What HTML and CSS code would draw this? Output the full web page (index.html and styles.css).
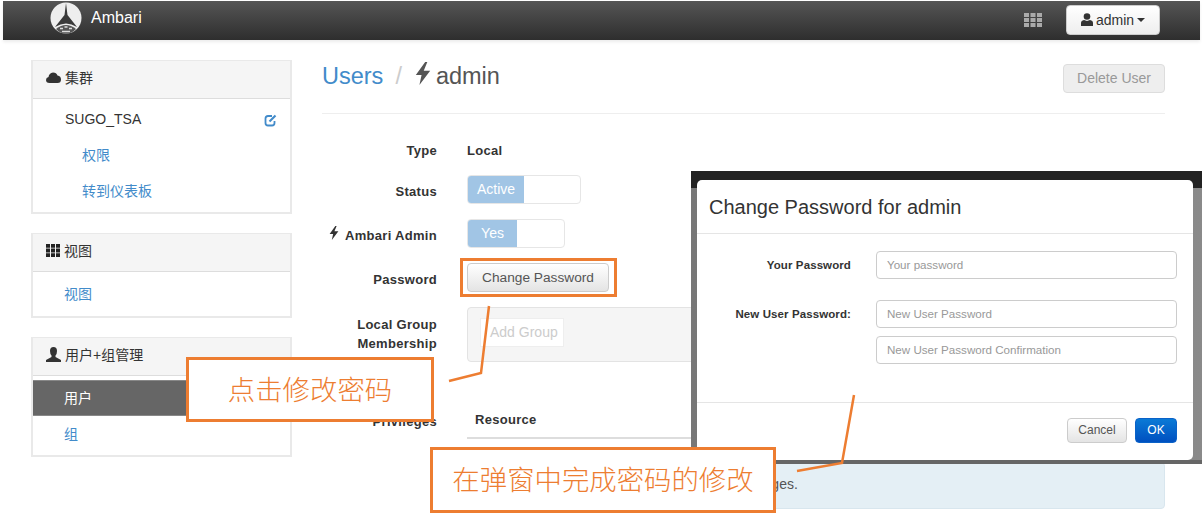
FILE: index.html
```html
<!DOCTYPE html>
<html lang="en">
<head>
    <meta charset="UTF-8">
    <title>Ambari</title>
    <link rel="stylesheet" href="styles.css">
</head>
<body>
<div id="topbar">
    <a class="brand">
        <svg class="logo" width="32" height="32" viewBox="0 0 32 32">
            <circle cx="16" cy="16" r="15.500" fill="#eee"/>
            <path d="M16 1 L17.500 13 L27 25 Q16 18 5 25 L14.500 13 Z" fill="#3a3a3a"/>
            <path d="M6 27 Q16 19 26 27 Q22 31.500 16 31.500 Q10 31.500 6 27 Z" fill="#555"/>
            <path d="M10 26.500h3M14.500 25h3M19 26.500h3M12 29.500h8" stroke="#ddd" stroke-width="1.400"/>
        </svg>
        Ambari
    </a>
    <div class="topright">
        <svg width="18" height="14" viewBox="0 0 18 14" fill="#aaa">
            <path d="M0 0h5v4H0zM6.500 0h5v4h-5zM13 0h5v4h-5zM0 5h5v4H0zM6.500 5h5v4h-5zM13 5h5v4h-5zM0 10h5v4H0zM6.500 10h5v4h-5zM13 10h5v4h-5z"/>
        </svg>
        <div class="userbtn">
            <svg width="12" height="13" viewBox="0 0 12 13" fill="#333"><circle cx="6" cy="3.500" r="3.300"/><path d="M0 13V10Q0 7.500 3 7L6 8L9 7Q12 7.500 12 10V13Z"/></svg>
            admin
            <span class="caret"></span>
        </div>
    </div>
</div>

<div id="page">
    <div id="sidebar">
        <div class="panel">
            <div class="panel-head">
                <svg width="15" height="11" viewBox="0 0 15 11" fill="#333"><path d="M3.500 11Q0 11 0 8Q0 5.500 2.500 5Q3 1 7 .5Q10.500 .5 11.500 3.500Q15 4 15 7.500Q15 11 11.500 11Z"/></svg>
                集群
            </div>
            <div class="panel-body">
                <div class="cluster">SUGO_TSA
                    <svg class="edit" width="13" height="13" viewBox="0 0 13 13" fill="none" stroke="#428bca" stroke-width="1.800"><path d="M8 2H4Q1.500 2 1.500 4.500V9Q1.500 11.500 4 11.500H8Q10.500 11.500 10.500 9V7"/><path d="M5.500 7.500L11.500 1.500" stroke-width="2.200"/></svg>
                </div>
                <a class="item sub">权限</a>
                <a class="item sub">转到仪表板</a>
            </div>
        </div>
        <div class="panel">
            <div class="panel-head">
                <svg width="14" height="13" viewBox="0 0 14 13" fill="#222"><path d="M0 0h4v3.800H0zM5 0h4v3.800H5zM10 0h4v3.800h-4zM0 4.600h4v3.800H0zM5 4.600h4v3.800H5zM10 4.600h4v3.800h-4zM0 9.200h4V13H0zM5 9.200h4V13H5zM10 9.200h4V13h-4z"/></svg>
                视图
            </div>
            <div class="panel-body short">
                <a class="item">视图</a>
            </div>
        </div>
        <div class="panel">
            <div class="panel-head">
                <svg width="15" height="15" viewBox="0 0 15 15" fill="#333"><path d="M7.500 0Q11 0 11 4Q11 7 9.500 8.500V10L15 13V15H0V13L5.500 10V8.500Q4 7 4 4Q4 0 7.500 0Z"/></svg>
                用户+组管理
            </div>
            <div class="panel-body users">
                <a class="item active">用户</a>
                <a class="item">组</a>
            </div>
        </div>
    </div>

    <div id="main">
        <div class="title-row">
            <h2><a>Users</a><span class="slash">/</span><svg class="bolt" width="16" height="23" viewBox="0 0 10 16" fill="#555"><path d="M6.500 0L0 9H4L2.500 16L10 6H5.500L8 0Z"/></svg>admin</h2>
            <div class="btn-delete">Delete User</div>
        </div>

        <div class="row type-row"><label>Type</label><b>Local</b></div>
        <div class="row status-row">
            <label>Status</label>
            <div class="toggle wide"><span>Active</span></div>
        </div>
        <div class="row admin-row">
            <label><svg class="label-bolt" width="10" height="14" viewBox="0 0 10 16" fill="#333"><path d="M6.500 0L0 9H4L2.500 16L10 6H5.500L8 0Z"/></svg>Ambari Admin</label>
            <div class="toggle"><span>Yes</span></div>
        </div>
        <div class="row pass-row">
            <label>Password</label>
            <div class="btn">Change Password</div>
        </div>
        <div class="row group-row">
            <label>Local Group<br>Membership</label>
            <div class="groupbox"><span class="addgroup">Add Group</span></div>
        </div>
        <div class="row priv-row">
            <label>Privileges</label>
            <div class="resource"><b>Resource</b></div>
        </div>
        <div class="row alert-row">
            <label></label>
            <div class="alert">This user is an Ambari Admin and has all privileges.</div>
        </div>
    </div>
</div>

<!-- modal pasted over the page -->
<div id="backdrop"></div>
<div id="modal">
    <div class="modal-head">Change Password for admin</div>
    <div class="modal-body">
        <div class="mrow">
            <label>Your Password</label>
            <div class="inputs"><div class="input">Your password</div></div>
        </div>
        <div class="mrow">
            <label>New User Password:</label>
            <div class="inputs">
                <div class="input">New User Password</div>
                <div class="input">New User Password Confirmation</div>
            </div>
        </div>
    </div>
    <div class="modal-foot">
        <div class="btn small">Cancel</div>
        <div class="btn small ok">OK</div>
    </div>
</div>

<!-- annotations -->
<div class="ring"></div>
<svg id="lines" width="1202" height="524" viewBox="0 0 1202 524" fill="none" stroke="#ed7d31" stroke-width="2.500">
    <path d="M489 306L481 373L449 381"/>
    <path d="M854 395L842 463L797 471"/>
</svg>
<div class="callout one">点击修改密码</div>
<div class="callout two">在弹窗中完成密码的修改</div>
</body>
</html>
```

FILE: styles.css
```css
*{
    margin:0;
    padding:0;
    box-sizing:border-box;
}
body{
    width:1202px;
    height:524px;
    overflow:hidden;
    background:#fff;
    color:#333;
    font-family:"Liberation Sans","Noto Sans CJK SC",sans-serif;
    font-size:14px;
    padding-top:1px;
    position:relative;
}
a{
    color:#428bca;
}

/* top bar */
#topbar{
    height:39px;
    margin:0 2px 0 3px;
    background:linear-gradient(#555,#2e2e2e);
    box-shadow:0 2px 3px rgba(0,0,0,.08);
    display:flex;
    align-items:center;
    justify-content:space-between;
    padding:0 40px 0 47px;
}
.brand{
    display:flex;
    align-items:center;
    gap:9px;
    color:#fff;
    font-size:16px;
    margin-top:-5px;
}
.logo{
    flex:none;
}
.topright{
    display:flex;
    align-items:center;
    gap:24px;
    margin-top:-2px;
}
.userbtn{
    width:94px;
    height:30px;
    background:linear-gradient(#fff,#eee);
    border:1px solid #ccc;
    border-radius:4px;
    color:#333;
    display:flex;
    align-items:center;
    justify-content:center;
    gap:3px;
}
.caret{
    border-top:4px solid #333;
    border-left:4px solid transparent;
    border-right:4px solid transparent;
}

/* layout */
#page{
    display:flex;
    padding:20px 37px 0 31px;
    gap:30px;
}
#sidebar{
    width:261px;
    flex:none;
}
#main{
    flex:1;
}

/* sidebar */
.panel{
    border:2px solid #e9e9e9;
    border-width:1px 2px 2px 2px;
    margin-bottom:19px;
}
.panel-head{
    height:38px;
    background:#f5f5f5;
    border-bottom:1px solid #ddd;
    display:flex;
    align-items:center;
    gap:4px;
    padding:0 0 5px 13px;
}
.panel-body{
    height:113px;
    padding-top:2px;
}
.panel-body.short{
    height:44px;
    padding-top:4px;
}
.panel-body.users{
    height:79px;
    padding-top:4px;
}
.cluster{
    height:36px;
    display:flex;
    align-items:center;
    justify-content:space-between;
    padding:0 13px 0 32px;
}
.edit{
    margin-top:2px;
}
.item{
    display:flex;
    align-items:center;
    height:36px;
    padding:0 0 2px 31px;
}
.item.sub{
    padding-left:49px;
}
.item.active{
    background:#666;
    border:1px solid #888;
    border-width:1px 0;
    color:#fff;
}

/* main */
.title-row{
    height:54px;
    border-bottom:1px solid #eee;
    display:flex;
    justify-content:space-between;
    align-items:flex-start;
    margin-bottom:26px;
}
h2{
    font-size:23.500px;
    font-weight:normal;
    line-height:33px;
    color:#555;
    display:flex;
    align-items:center;
}
.slash{
    color:#ccc;
    margin:0 13px 0 12px;
}
.bolt{
    margin:-6px 5px 0 0;
}
.btn-delete{
    width:102px;
    height:29px;
    margin-top:4px;
    background:#eee;
    border:1px solid #ddd;
    border-radius:4px;
    color:#999;
    text-align:center;
    line-height:27px;
}
.row{
    display:flex;
    align-items:center;
}
.row label{
    width:115px;
    margin-right:30px;
    padding-top:3px;
    text-align:right;
    font-weight:bold;
    font-size:13px;
    line-height:19px;
    letter-spacing:.3px;
}
.row b{
    font-size:13px;
    letter-spacing:.3px;
}
.label-bolt{
    margin-right:6px;
}
.type-row{
    height:20px;
    margin-bottom:15px;
}
.type-row label{
    padding-top:0;
}
.status-row,
.admin-row,
.pass-row{
    height:29px;
    margin-bottom:15px;
}
.pass-row label{
    padding-top:4px;
}
.group-row{
    height:55px;
    margin-bottom:38px;
}
.group-row label{
    padding:0 0 2px;
}
.toggle{
    width:98px;
    height:29px;
    border:1px solid #e6e6e6;
    border-radius:4px;
    overflow:hidden;
}
.toggle.wide{
    width:114px;
}
.toggle span{
    display:block;
    width:49px;
    height:100%;
    background:#a1c5e5;
    color:#fff;
    text-align:center;
    line-height:27px;
}
.toggle.wide span{
    width:56px;
}
.btn{
    width:142px;
    height:29px;
    background:linear-gradient(#fff,#e4e4e4);
    border:1px solid #ccc;
    border-radius:4px;
    color:#555;
    font-size:13.700px;
    text-align:center;
    line-height:28px;
}
.groupbox{
    flex:1;
    height:55px;
    background:#f5f5f5;
    border:1px solid #e3e3e3;
    border-radius:4px;
    padding:10px 12px;
}
.addgroup{
    display:block;
    width:84px;
    height:29px;
    background:#fff;
    border:1px solid #eee;
    color:#ccc;
    line-height:27px;
    padding-left:9px;
}
.priv-row{
    height:39px;
}
.resource{
    flex:1;
    height:39px;
    border-bottom:2px solid #ddd;
    padding:11px 0 0 8px;
}
.alert-row{
    margin-top:23px;
}
.alert{
    flex:1;
    height:47px;
    background:#e4eff5;
    border:1px solid #d8e6ee;
    border-radius:4px;
    color:#555;
    line-height:42px;
    padding-left:10px;
}

/* modal */
#backdrop{
    position:absolute;
    left:691px;
    top:171px;
    width:511px;
    height:293px;
    background:linear-gradient(#222 17px,transparent 17px),linear-gradient(90deg,#777,#8a8a8a);
    border-bottom:4px solid #666;
}
#modal{
    position:absolute;
    left:697px;
    top:180px;
    width:496px;
    height:280px;
    background:#fff;
    border-radius:5px;
    display:flex;
    flex-direction:column;
}
.modal-head{
    height:54px;
    border-bottom:1px solid #e5e5e5;
    font-size:20px;
    line-height:54px;
    padding-left:12px;
}
.modal-body{
    flex:1;
    padding-top:17px;
}
.mrow{
    display:flex;
    margin-bottom:21px;
}
.mrow label{
    width:154px;
    margin-right:25px;
    text-align:right;
    font-weight:bold;
    font-size:11.500px;
    line-height:28px;
    letter-spacing:.1px;
}
.inputs{
    width:301px;
}
.input{
    height:28px;
    border:1px solid #ccc;
    border-radius:4px;
    color:#999;
    font-size:11.600px;
    line-height:26px;
    padding-left:10px;
    margin-bottom:8px;
}
.inputs .input:last-child{
    margin-bottom:0;
}
.modal-foot{
    height:58px;
    border-top:1px solid #e5e5e5;
    display:flex;
    justify-content:flex-end;
    gap:8px;
    padding:15px 16px 0 0;
}
.btn.small{
    width:60px;
    height:25px;
    font-size:12px;
    line-height:23px;
}
.btn.ok{
    width:42px;
    background:linear-gradient(#0a7ad6,#0050c0);
    border-color:#0a62c8;
    color:#fff;
}

/* annotations */
.ring{
    position:absolute;
    left:460px;
    top:258px;
    width:157px;
    height:39px;
    border:3px solid #ed7d31;
}
#lines{
    position:absolute;
    left:0;
    top:0;
}
.callout{
    position:absolute;
    border:3px solid #ed7d31;
    background:#fff;
    color:#ed7d31;
    font-size:27.400px;
    font-weight:300;
    text-align:center;
}
.callout.one{
    left:186px;
    top:357px;
    width:248px;
    height:65px;
    line-height:61px;
}
.callout.two{
    left:430px;
    top:447px;
    width:346px;
    height:66px;
    line-height:62px;
}
```
